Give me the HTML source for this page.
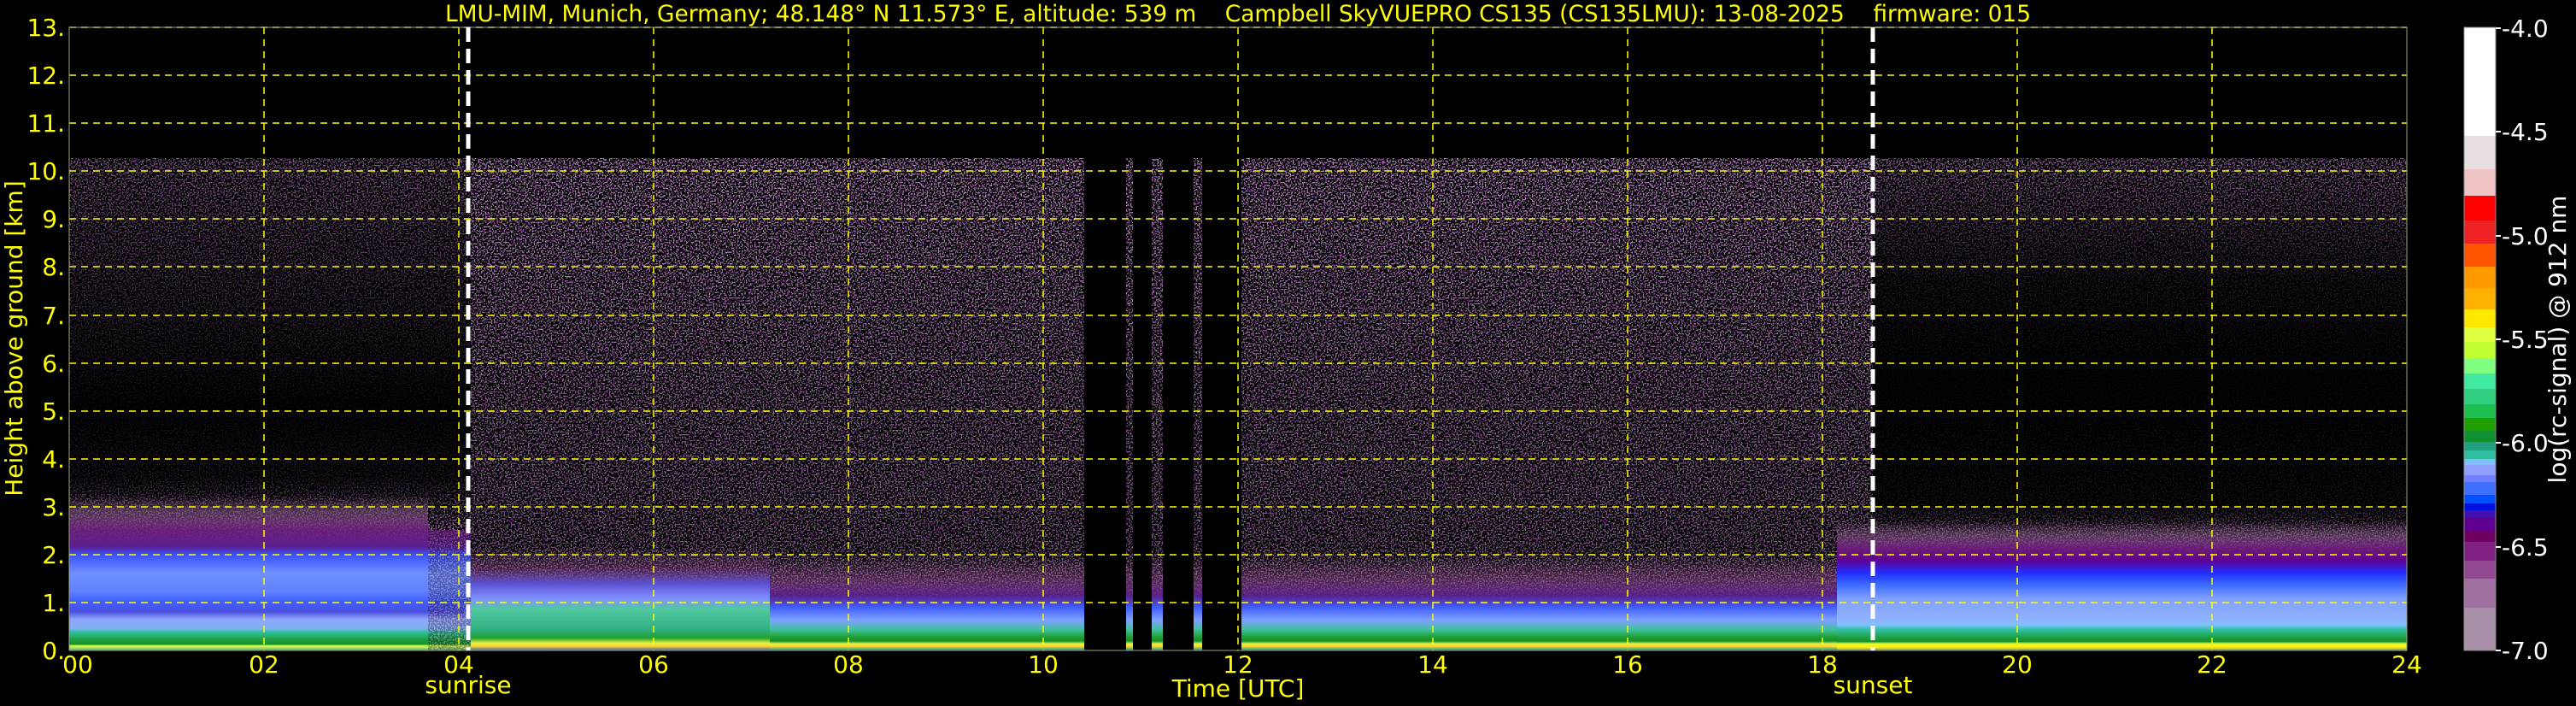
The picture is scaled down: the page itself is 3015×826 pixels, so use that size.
<!DOCTYPE html>
<html><head><meta charset="utf-8"><style>
html,body{margin:0;padding:0;background:#000;width:3015px;height:826px;overflow:hidden}
svg{display:block}
</style></head><body>
<svg width="3015" height="826" viewBox="0 0 3015 826" xmlns="http://www.w3.org/2000/svg" font-family="DejaVu Sans, Liberation Sans, sans-serif">
<defs>
<filter id="nz" x="0" y="0" width="100%" height="100%" filterUnits="objectBoundingBox">
<feTurbulence type="fractalNoise" baseFrequency="0.6" numOctaves="1" seed="7"/>
<feColorMatrix type="matrix" values="0.9 0.2 0 0 0.15  0 1.3 0 0 -0.3  0.2 0 0.8 0 0.3  0 0 0 -14 6.8"/>
</filter>
<linearGradient id="nE" x1="0" y1="185" x2="0" y2="761" gradientUnits="userSpaceOnUse">
<stop offset="0" stop-color="#000" stop-opacity="0.45"/>
<stop offset="0.3" stop-color="#000" stop-opacity="0.75"/>
<stop offset="0.5" stop-color="#000" stop-opacity="0.95"/>
<stop offset="0.65" stop-color="#000" stop-opacity="0.85"/>
<stop offset="0.72" stop-color="#000" stop-opacity="0.5"/>
<stop offset="0.8" stop-color="#000" stop-opacity="0"/>
<stop offset="1" stop-color="#000" stop-opacity="0"/>
</linearGradient>
<linearGradient id="nD" x1="0" y1="185" x2="0" y2="761" gradientUnits="userSpaceOnUse">
<stop offset="0" stop-color="#000" stop-opacity="0.2"/>
<stop offset="0.5" stop-color="#000" stop-opacity="0.4"/>
<stop offset="0.8" stop-color="#000" stop-opacity="0.45"/>
<stop offset="1" stop-color="#000" stop-opacity="0.3"/>
</linearGradient>
<linearGradient id="nL" x1="0" y1="185" x2="0" y2="761" gradientUnits="userSpaceOnUse">
<stop offset="0" stop-color="#000" stop-opacity="0.4"/>
<stop offset="0.25" stop-color="#000" stop-opacity="0.85"/>
<stop offset="0.45" stop-color="#000" stop-opacity="0.97"/>
<stop offset="0.7" stop-color="#000" stop-opacity="0.9"/>
<stop offset="0.77" stop-color="#000" stop-opacity="0.4"/>
<stop offset="0.82" stop-color="#000" stop-opacity="0"/>
</linearGradient>
<linearGradient id="gE" x1="0" y1="580" x2="0" y2="761" gradientUnits="userSpaceOnUse">
<stop offset="0" stop-color="#a070a0" stop-opacity="0"/>
<stop offset="0.1" stop-color="#906090" stop-opacity="0.5"/>
<stop offset="0.22" stop-color="#702080" stop-opacity="0.9"/>
<stop offset="0.33" stop-color="#5a2090"/>
<stop offset="0.38" stop-color="#3a50ff"/>
<stop offset="0.5" stop-color="#7090ff"/>
<stop offset="0.62" stop-color="#6080ff"/>
<stop offset="0.68" stop-color="#4060ff"/>
<stop offset="0.75" stop-color="#4a50e0"/>
<stop offset="0.8" stop-color="#90a8ff"/>
<stop offset="0.86" stop-color="#80b0f0"/>
<stop offset="0.88" stop-color="#30c0a0"/>
<stop offset="0.93" stop-color="#20a040"/>
<stop offset="0.96" stop-color="#109030"/>
<stop offset="0.97" stop-color="#e0ff40"/>
<stop offset="0.985" stop-color="#a0e060"/>
<stop offset="1" stop-color="#30a0a0"/>
</linearGradient>
<linearGradient id="gD" x1="0" y1="650" x2="0" y2="761" gradientUnits="userSpaceOnUse">
<stop offset="0" stop-color="#a070a0" stop-opacity="0"/>
<stop offset="0.25" stop-color="#904890" stop-opacity="0.5"/>
<stop offset="0.42" stop-color="#602090" stop-opacity="0.9"/>
<stop offset="0.55" stop-color="#4060ff"/>
<stop offset="0.68" stop-color="#80a0ff"/>
<stop offset="0.78" stop-color="#40c0a0"/>
<stop offset="0.86" stop-color="#20a030"/>
<stop offset="0.9" stop-color="#109030"/>
<stop offset="0.93" stop-color="#e8f040"/>
<stop offset="0.96" stop-color="#ffd030"/>
<stop offset="0.98" stop-color="#60c060"/>
<stop offset="1" stop-color="#3060c0"/>
</linearGradient>
<linearGradient id="gD2" x1="0" y1="640" x2="0" y2="761" gradientUnits="userSpaceOnUse">
<stop offset="0" stop-color="#a070a0" stop-opacity="0"/>
<stop offset="0.2" stop-color="#904890" stop-opacity="0.4"/>
<stop offset="0.35" stop-color="#5a50d0"/>
<stop offset="0.5" stop-color="#8090ff"/>
<stop offset="0.6" stop-color="#50c8a0"/>
<stop offset="0.8" stop-color="#30b080"/>
<stop offset="0.88" stop-color="#20a030"/>
<stop offset="0.93" stop-color="#e8f040"/>
<stop offset="0.96" stop-color="#ffd030"/>
<stop offset="1" stop-color="#3060c0"/>
</linearGradient>
<linearGradient id="gL" x1="0" y1="610" x2="0" y2="761" gradientUnits="userSpaceOnUse">
<stop offset="0" stop-color="#a070a0" stop-opacity="0"/>
<stop offset="0.1" stop-color="#906090" stop-opacity="0.5"/>
<stop offset="0.2" stop-color="#702080" stop-opacity="0.9"/>
<stop offset="0.3" stop-color="#600090"/>
<stop offset="0.4" stop-color="#2030ff"/>
<stop offset="0.5" stop-color="#4070ff"/>
<stop offset="0.6" stop-color="#80a0ff"/>
<stop offset="0.75" stop-color="#90b0ff"/>
<stop offset="0.8" stop-color="#80c0ff"/>
<stop offset="0.84" stop-color="#30c0a0"/>
<stop offset="0.9" stop-color="#20a040"/>
<stop offset="0.93" stop-color="#109030"/>
<stop offset="0.95" stop-color="#f0ff30"/>
<stop offset="0.98" stop-color="#ffe800"/>
<stop offset="1" stop-color="#3080c0"/>
</linearGradient>
<linearGradient id="fadeL" x1="0" x2="1" y1="0" y2="0"><stop offset="0" stop-color="#000" stop-opacity="0"/><stop offset="1" stop-color="#000" stop-opacity="1"/></linearGradient>
<clipPath id="data">
<rect x="81" y="185" width="1188" height="576"/>
<rect x="1318" y="185" width="8" height="576"/>
<rect x="1348" y="185" width="13" height="576"/>
<rect x="1397" y="185" width="10" height="576"/>
<rect x="1453" y="185" width="1364" height="576"/>
</clipPath>
</defs>

<g clip-path="url(#data)">
<rect x="81" y="185" width="2736" height="576" fill="#000"/>
<rect x="81" y="185" width="2736" height="576" filter="url(#nz)"/>
<rect x="81" y="185" width="470" height="576" fill="url(#nE)"/>
<rect x="551" y="185" width="1641" height="576" fill="url(#nD)"/>
<rect x="2192" y="185" width="625" height="576" fill="url(#nL)"/>
<rect x="81" y="580" width="420" height="181" fill="url(#gE)"/>
<rect x="501" y="620" width="50" height="141" fill="url(#gE)" opacity="0.7"/>
<rect x="551" y="640" width="350" height="121" fill="url(#gD2)"/>
<rect x="901" y="650" width="1291" height="111" fill="url(#gD)"/>
<rect x="2150" y="610" width="667" height="151" fill="url(#gL)"/>
</g>

<g stroke="#ffff00" stroke-width="1.5" stroke-dasharray="8,6" fill="none">
<line x1="81" x2="2817" y1="705" y2="705"/><line x1="81" x2="2817" y1="649" y2="649"/>
<line x1="81" x2="2817" y1="593" y2="593"/><line x1="81" x2="2817" y1="537" y2="537"/>
<line x1="81" x2="2817" y1="481" y2="481"/><line x1="81" x2="2817" y1="425" y2="425"/>
<line x1="81" x2="2817" y1="369" y2="369"/><line x1="81" x2="2817" y1="312" y2="312"/>
<line x1="81" x2="2817" y1="256" y2="256"/><line x1="81" x2="2817" y1="200" y2="200"/>
<line x1="81" x2="2817" y1="144" y2="144"/><line x1="81" x2="2817" y1="88" y2="88"/>
<line y1="32" y2="761" x1="309" x2="309"/><line y1="32" y2="761" x1="537" x2="537"/>
<line y1="32" y2="761" x1="765" x2="765"/><line y1="32" y2="761" x1="993" x2="993"/>
<line y1="32" y2="761" x1="1221" x2="1221"/><line y1="32" y2="761" x1="1449" x2="1449"/>
<line y1="32" y2="761" x1="1677" x2="1677"/><line y1="32" y2="761" x1="1905" x2="1905"/>
<line y1="32" y2="761" x1="2133" x2="2133"/><line y1="32" y2="761" x1="2361" x2="2361"/>
<line y1="32" y2="761" x1="2589" x2="2589"/>
<line x1="81" x2="2817" y1="32" y2="32"/>
</g>
<rect x="81" y="32" width="2736" height="729" fill="none" stroke="#a0a080" stroke-width="1"/>
<g stroke="#fff" stroke-width="5" stroke-dasharray="17,8">
<line x1="548" x2="548" y1="32" y2="761"/>
<line x1="2192" x2="2192" y1="32" y2="761"/>
</g>

<text x="521" y="25" font-size="27" fill="#ffff00" textLength="1856" lengthAdjust="spacingAndGlyphs" xml:space="preserve">LMU-MIM, Munich, Germany; 48.148° N 11.573° E, altitude: 539 m    Campbell SkyVUEPRO CS135 (CS135LMU): 13-08-2025    firmware: 015</text>

<g font-size="28" fill="#ffff00" text-anchor="end">
<text x="76" y="771">0.</text><text x="76" y="715">1.</text><text x="76" y="659">2.</text>
<text x="76" y="603">3.</text><text x="76" y="547">4.</text><text x="76" y="491">5.</text>
<text x="76" y="435">6.</text><text x="76" y="379">7.</text><text x="76" y="322">8.</text>
<text x="76" y="266">9.</text><text x="76" y="210">10.</text><text x="76" y="154">11.</text>
<text x="76" y="98">12.</text><text x="76" y="42">13.</text>
</g>
<text transform="translate(26,396) rotate(-90)" font-size="28" fill="#ffff00" text-anchor="middle">Height above ground [km]</text>

<g font-size="28" fill="#ffff00" text-anchor="middle">
<text x="91" y="787">00</text><text x="309" y="787">02</text><text x="537" y="787">04</text>
<text x="765" y="787">06</text><text x="993" y="787">08</text><text x="1221" y="787">10</text>
<text x="1449" y="787">12</text><text x="1677" y="787">14</text><text x="1905" y="787">16</text>
<text x="2133" y="787">18</text><text x="2361" y="787">20</text><text x="2589" y="787">22</text>
<text x="2817" y="787">24</text>
<text x="548" y="811">sunrise</text>
<text x="1449" y="815">Time [UTC]</text>
<text x="2192" y="811">sunset</text>
</g>

<g>
<rect x="2884" y="32" width="37" height="127" fill="#ffffff"/>
<rect x="2884" y="159" width="37" height="39" fill="#e8e0e0"/>
<rect x="2884" y="198" width="37" height="31" fill="#f0c4c4"/>
<rect x="2884" y="229" width="37" height="29" fill="#ff0000"/>
<rect x="2884" y="258" width="37" height="27" fill="#ee2222"/>
<rect x="2884" y="285" width="37" height="27" fill="#ff5500"/>
<rect x="2884" y="312" width="37" height="25" fill="#ff9900"/>
<rect x="2884" y="337" width="37" height="25" fill="#ffb000"/>
<rect x="2884" y="362" width="37" height="21" fill="#ffe800"/>
<rect x="2884" y="383" width="37" height="17" fill="#e0ff40"/>
<rect x="2884" y="400" width="37" height="20" fill="#c0ff30"/>
<rect x="2884" y="420" width="37" height="17" fill="#80ff80"/>
<rect x="2884" y="437" width="37" height="18" fill="#40e8a0"/>
<rect x="2884" y="455" width="37" height="18" fill="#30d080"/>
<rect x="2884" y="473" width="37" height="16" fill="#20c050"/>
<rect x="2884" y="489" width="37" height="15" fill="#20a000"/>
<rect x="2884" y="504" width="37" height="13" fill="#109030"/>
<rect x="2884" y="517" width="37" height="10" fill="#20a080"/>
<rect x="2884" y="527" width="37" height="10" fill="#30c0a0"/>
<rect x="2884" y="537" width="37" height="7" fill="#80c0ff"/>
<rect x="2884" y="544" width="37" height="12" fill="#90a0ff"/>
<rect x="2884" y="556" width="37" height="8" fill="#7080ff"/>
<rect x="2884" y="564" width="37" height="15" fill="#4070ff"/>
<rect x="2884" y="579" width="37" height="10" fill="#0050ff"/>
<rect x="2884" y="589" width="37" height="8" fill="#0010e0"/>
<rect x="2884" y="597" width="37" height="9" fill="#4010b0"/>
<rect x="2884" y="606" width="37" height="15" fill="#600090"/>
<rect x="2884" y="621" width="37" height="13" fill="#700060"/>
<rect x="2884" y="634" width="37" height="22" fill="#802080"/>
<rect x="2884" y="656" width="37" height="21" fill="#904890"/>
<rect x="2884" y="677" width="37" height="34" fill="#a070a0"/>
<rect x="2884" y="711" width="37" height="50" fill="#a890a8"/>
<rect x="2884" y="32" width="37" height="729" fill="none" stroke="#888" stroke-width="1"/>
</g>
<g stroke="#fff" stroke-width="2">
<line x1="2921" x2="2927" y1="33" y2="33"/><line x1="2921" x2="2927" y1="154" y2="154"/>
<line x1="2921" x2="2927" y1="276" y2="276"/><line x1="2921" x2="2927" y1="397" y2="397"/>
<line x1="2921" x2="2927" y1="518" y2="518"/><line x1="2921" x2="2927" y1="640" y2="640"/>
<line x1="2921" x2="2927" y1="761" y2="761"/>
</g>
<g font-size="28" fill="#fff">
<text x="2928" y="43">-4.0</text><text x="2928" y="164">-4.5</text>
<text x="2928" y="286">-5.0</text><text x="2928" y="407">-5.5</text>
<text x="2928" y="528">-6.0</text><text x="2928" y="650">-6.5</text>
<text x="2928" y="771">-7.0</text>
</g>
<text transform="translate(3003,397) rotate(-90)" font-size="28" fill="#fff" text-anchor="middle">log(rc-signal) @ 912 nm</text>
</svg>
</body></html>
